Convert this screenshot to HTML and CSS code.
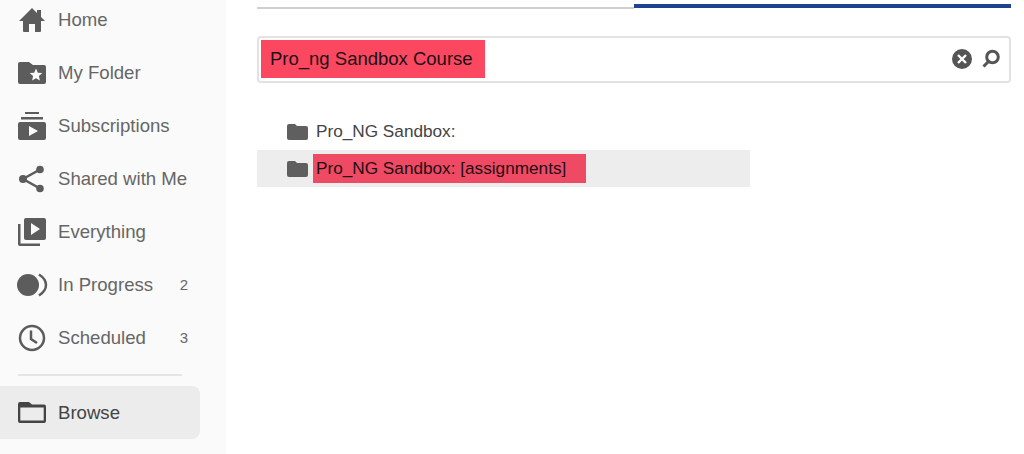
FILE: index.html
```html
<!DOCTYPE html>
<html lang="en">
<head>
    <meta charset="UTF-8">
    <meta name="viewport" content="width=device-width, initial-scale=1.0">
    <title>Browse</title>
    <link rel="stylesheet" href="styles.css">
</head>
<body>
    <!-- Sidebar -->
    <nav class="sidebar">
        <a class="nav-item">
            <svg class="nav-icon" viewBox="0 0 28 28"><path d="M14 2 1 15h4v10q0 1 1 1h5v-8h6v8h5q1 0 1-1V15h4l-4-4V4h-4v3z"/></svg>
            <span class="nav-label">Home</span>
        </a>
        <a class="nav-item">
            <svg class="nav-icon" viewBox="0 0 28 28"><path fill-rule="evenodd" d="M2 3h9l4 3h11q2 0 2 2v15q0 2-2 2H2q-2 0-2-2V5q0-2 2-2zm16 6.500-1.800 4.200-4.500.400 3.400 3-1 4.400 3.900-2.300 3.900 2.300-1-4.400 3.400-3-4.500-.400z"/></svg>
            <span class="nav-label">My Folder</span>
        </a>
        <a class="nav-item">
            <svg class="nav-icon" viewBox="0 0 28 28"><path fill-rule="evenodd" d="M7 0h14v2H7zM3 5h22v2.500H3zM2 10h24q2 0 2 2v14q0 2-2 2H2q-2 0-2-2V12q0-2 2-2zm9 4v10l9-5z"/></svg>
            <span class="nav-label">Subscriptions</span>
        </a>
        <a class="nav-item">
            <svg class="nav-icon" viewBox="0 0 28 28"><circle cx="5" cy="14" r="4"/><circle cx="22" cy="4.500" r="3.800"/><circle cx="22" cy="23.500" r="3.800"/><path class="icon-line" d="M22 4.500 5 14l17 9.500"/></svg>
            <span class="nav-label">Shared with Me</span>
        </a>
        <a class="nav-item">
            <svg class="nav-icon" viewBox="0 0 28 28"><path fill-rule="evenodd" d="M8 0h18q2 0 2 2v18q0 2-2 2H8q-2 0-2-2V2q0-2 2-2zm5 5v12l9-6z"/><path d="M0 6h2.500v19.500H22V28H2q-2 0-2-2z"/></svg>
            <span class="nav-label">Everything</span>
        </a>
        <a class="nav-item">
            <svg class="nav-icon" viewBox="0 0 28 28"><circle cx="10" cy="14" r="11"/><path class="icon-stroke" d="M21 3.500Q28 8 28 14t-7 10.500"/></svg>
            <span class="nav-label">In Progress</span>
            <span class="nav-count">2</span>
        </a>
        <a class="nav-item">
            <svg class="nav-icon" viewBox="0 0 28 28"><circle class="icon-stroke" cx="14" cy="14" r="12"/><path class="icon-stroke" d="M13 6.500V15l6 4"/></svg>
            <span class="nav-label">Scheduled</span>
            <span class="nav-count">3</span>
        </a>
        <div class="nav-divider"></div>
        <a class="nav-item active">
            <svg class="nav-icon" viewBox="0 0 28 28"><path fill-rule="evenodd" d="M2 3h9l3 2.500h12q2 0 2 2V22q0 2-2 2H2q-2 0-2-2V5q0-2 2-2zm.300 5.500v13h23.400v-13z"/></svg>
            <span class="nav-label">Browse</span>
        </a>
    </nav>

    <!-- Main Content -->
    <main class="content">
        <div class="tabs">
            <div class="tab"></div>
            <div class="tab active"></div>
        </div>

        <div class="search-box">
            <span class="search-text">Pro_ng Sandbox Course</span>
            <div class="search-actions">
                <svg class="clear-icon" viewBox="0 0 20 20"><circle cx="10" cy="10" r="10"/><path d="m6 6 8 8m0-8-8 8"/></svg>
                <svg class="search-icon" viewBox="0 0 20 20"><circle cx="11.500" cy="8" r="5.800"/><path d="M7.500 12.500 2.500 17.500"/></svg>
            </div>
        </div>

        <ul class="tree">
            <li class="tree-row">
                <svg class="folder-icon" viewBox="0 0 21 16"><path d="M2 0h6l2 2h9q2 0 2 2v10q0 2-2 2H2q-2 0-2-2V2q0-2 2-2z"/></svg>
                <span class="tree-label">Pro_NG Sandbox:</span>
            </li>
            <li class="tree-row selected">
                <svg class="folder-icon" viewBox="0 0 21 16"><path d="M2 0h6l2 2h9q2 0 2 2v10q0 2-2 2H2q-2 0-2-2V2q0-2 2-2z"/></svg>
                <span class="tree-label marked">Pro_NG Sandbox: [assignments]</span>
            </li>
        </ul>
    </main>
</body>
</html>
```
FILE: styles.css
```css
/* General Styles */
html, body {
    height: 100%;
}

body {
    font-family: 'Liberation Sans', Arial, sans-serif;
    margin: 0;
    display: flex;
    overflow: hidden;
    background-color: #fff;
    color: #333;
}

/* Sidebar */
.sidebar {
    width: 226px;
    flex-shrink: 0;
    background-color: #fafafa;
    margin-top: -7px;
}

.nav-item {
    display: flex;
    align-items: center;
    height: 53px;
    padding: 0 12px 0 18px;
    margin-right: 26px;
    color: #666;
    font-size: 18.600px;
    white-space: nowrap;
}

.nav-icon {
    width: 28px;
    height: 28px;
    margin-right: 12px;
    flex-shrink: 0;
    fill: #5c5c5c;
    overflow: visible;
}

.nav-label {
    flex: 1;
}

.nav-count {
    font-size: 15px;
}

.nav-divider {
    height: 2px;
    background-color: #e4e4e4;
    margin: 10px 44px 10px 18px;
}

.nav-item.active {
    background-color: #ececec;
    border-radius: 0 8px 8px 0;
    color: #444;
}

.nav-item.active .nav-icon {
    fill: #444;
}

.icon-line,
.icon-stroke {
    fill: none;
    stroke: #5c5c5c;
    stroke-width: 2.500;
}

/* Main Content */
.content {
    flex: 1;
    padding: 0 13px 0 31px;
}

/* Tabs */
.tabs {
    display: flex;
    align-items: flex-end;
    height: 9px;
    margin-bottom: 27px;
}

.tab {
    flex: 1;
    height: 2px;
    background-color: #cfcfcf;
}

.tab.active {
    height: 4px;
    margin-bottom: 1px;
    background-color: #1f4390;
}

/* Search Box */
.search-box {
    display: flex;
    align-items: center;
    justify-content: space-between;
    box-sizing: border-box;
    height: 47px;
    padding: 2px 8px 3px 2px;
    border: 2px solid #e2e2e2;
    border-radius: 4px;
}

.search-text {
    padding: 0 12px 0 9px;
    line-height: 38px;
    font-size: 18.500px;
    color: #1a1016;
    background-color: #fb4860;
}

.search-actions {
    display: flex;
    align-items: center;
    gap: 9px;
}

.clear-icon {
    width: 20px;
    height: 20px;
    fill: #555;
    stroke: #fff;
    stroke-width: 2.400;
}

.clear-icon circle {
    stroke: none;
}

.search-icon {
    width: 20px;
    height: 20px;
    fill: none;
    stroke: #555;
    stroke-width: 3;
}

/* Tree */
.tree {
    list-style: none;
    margin: 30px 0 0;
    padding: 0;
    width: 493px;
}

.tree-row {
    display: flex;
    align-items: center;
    height: 37px;
    padding-left: 30px;
    font-size: 17.200px;
    color: #444;
}

.tree-row.selected {
    background-color: #ededed;
}

.folder-icon {
    width: 21px;
    height: 16px;
    margin-right: 5px;
    fill: #5f5f5f;
}

.tree-label {
    padding: 0 3px;
    line-height: 29px;
}

.tree-label.marked {
    padding-right: 20px;
    color: #1f0d14;
    background-color: #ef4a63;
}
```
